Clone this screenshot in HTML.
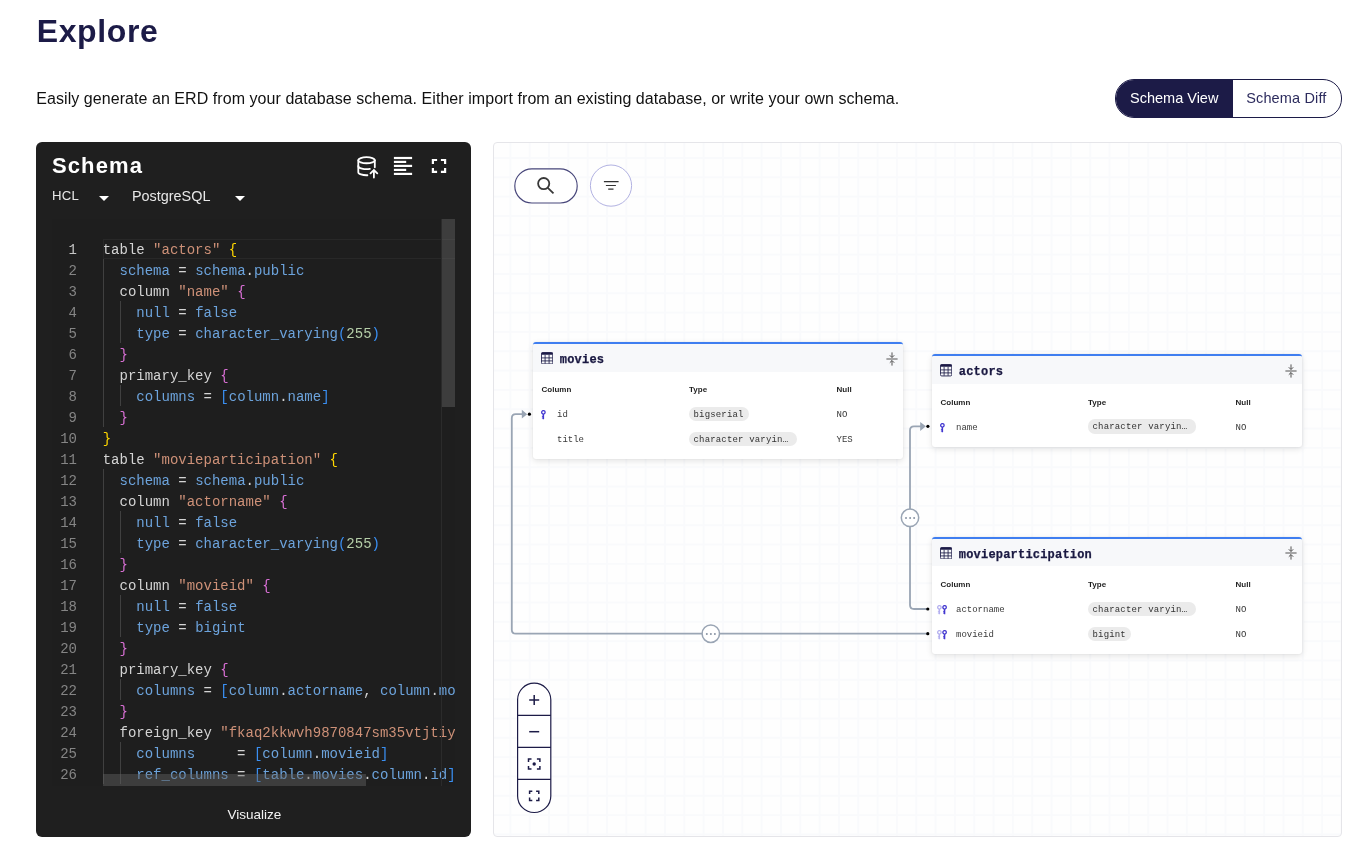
<!DOCTYPE html>
<html>
<head>
<meta charset="utf-8">
<style>
*{box-sizing:border-box;margin:0;padding:0}
html,body{width:1357px;height:855px;overflow:hidden;background:#fff;font-family:"Liberation Sans",sans-serif}
.abs{position:absolute}
#title{left:36.7px;top:10.5px;font-size:32px;font-weight:700;color:#1c1b47;line-height:40px;letter-spacing:0.62px;white-space:nowrap}
#desc{left:36.3px;top:88.8px;font-size:16px;color:#111;line-height:20px;letter-spacing:0.057px;white-space:nowrap}
#toggle{left:1115px;top:79px;width:227px;height:38.8px;border:1.3px solid #1c1b47;border-radius:19px;overflow:hidden;display:flex}
#toggle .on{width:117.2px;background:#1c1b47;color:#fff;font-size:14.5px;line-height:36.5px;padding-left:14px;white-space:nowrap}
#toggle .off{flex:1;color:#2d2c5e;font-size:14.5px;line-height:36.5px;padding-left:13px;white-space:nowrap;letter-spacing:0.15px}

/* schema panel */
#panel{left:36px;top:142px;width:435px;height:695px;background:#1f1f1f;border-radius:6px}
#ptitle{left:52px;top:152.3px;font-size:22px;font-weight:700;color:#fff;line-height:28px;letter-spacing:1.1px;white-space:nowrap}
.dd{color:#e8e8e8;font-size:14px;line-height:18px;white-space:nowrap}
.tri{width:0;height:0;border-left:5px solid transparent;border-right:5px solid transparent;border-top:5.5px solid #fff}
#editor{left:52px;top:219px;width:403px;height:567px;background:#1e1e1e;overflow:hidden}
.ln{position:absolute;left:0;margin-top:2px;width:25px;text-align:right;color:#858585;font-family:"Liberation Mono",monospace;font-size:14px;line-height:21px}
.cl{position:absolute;left:50.7px;margin-top:2px;white-space:pre;color:#d4d4d4;font-family:"Liberation Mono",monospace;font-size:14px;line-height:21px}
.g{position:absolute;width:1px;background:#404040}
.s{color:#ce9178}.k{color:#6ca3dc}.y{color:#ffd700}.p{color:#da70d6}.n{color:#b5cea8}.b{color:#3a8ff2}.w{color:#d4d4d4}
#visualize{left:227.5px;top:807px;font-size:13.5px;color:#f2f2f2;line-height:16px;white-space:nowrap}

/* canvas */
#canvas{left:493px;top:142px;width:849px;height:695px;border:1.2px solid #e5e5e9;border-radius:4px;overflow:hidden;
 background-color:#fefefe;
 background-image:linear-gradient(to right,#f9fafc 2px,transparent 2px),linear-gradient(to bottom,#f9fafc 2px,transparent 2px);
 background-size:19.34px 19.34px;background-position:15.4px 14px}

.node{position:absolute;width:370px;background:#fff;border-radius:3px;box-shadow:0 2px 6px rgba(0,0,0,0.11),0 0 2px rgba(0,0,0,0.07);border-top:2.5px solid #3f7ef0;overflow:hidden}
.nh{position:absolute;left:0;top:0;width:370px;height:27.5px;background:#f7f8fa}
.nt{position:absolute;left:26.8px;top:9px;letter-spacing:0.2px;font-family:"Liberation Mono",monospace;font-weight:700;font-size:12px;line-height:14px;color:#1a1942;-webkit-text-stroke:0.25px #1a1942;white-space:nowrap}
.ch{position:absolute;top:40.3px;font-size:8px;font-weight:700;color:#1f1f1f;line-height:12px;white-space:nowrap}
.rt{position:absolute;font-family:"Liberation Mono",monospace;font-size:9px;line-height:12px;color:#3a3a3a;white-space:nowrap}
.badge{position:absolute;height:14.4px;padding:0 5px;border-radius:7px;background:#ebebeb;font-family:"Liberation Mono",monospace;font-size:9px;letter-spacing:0.17px;line-height:16.6px;color:#333;white-space:nowrap}
</style>
</head>
<body><div id="root" style="position:absolute;left:0;top:0;width:1357px;height:855px;will-change:transform">
<div id="title" class="abs">Explore</div>
<div id="desc" class="abs">Easily generate an ERD from your database schema. Either import from an existing database, or write your own schema.</div>
<div id="toggle" class="abs"><div class="on">Schema View</div><div class="off">Schema Diff</div></div>

<div id="panel" class="abs"></div>
<div id="ptitle" class="abs">Schema</div>
<svg class="abs" style="left:352px;top:152px" width="30" height="30" viewBox="0 0 30 30" fill="none" stroke="#fff" stroke-width="1.8" stroke-linecap="round">
<ellipse cx="14.55" cy="8.2" rx="8.25" ry="3.05"/>
<path d="M6.3 8.2V20.2A8.25 3.05 0 0 0 15.4 23.25"/>
<path d="M6.3 14A8.25 3.05 0 0 0 17.9 16.9"/>
<path d="M22.8 8.2V15.3"/>
<path d="M21.9 25.6V17.9M18.5 21.4L21.9 18L25.3 21.4"/>
</svg>
<svg class="abs" style="left:390px;top:152px" width="60" height="30" viewBox="0 0 60 30" fill="#fff">
<rect x="3.9" y="4.9" width="18.2" height="2.2"/><rect x="3.9" y="8.8" width="12.3" height="2.2"/><rect x="3.9" y="12.8" width="18.2" height="2.2"/><rect x="3.9" y="16.8" width="12.3" height="2.2"/><rect x="3.9" y="20.8" width="18.2" height="2.2"/>
<path d="M41.8 12.1V6.9H47.1V9.1H44V12.1Z"/>
<path d="M56.2 12.1V6.9H50.9V9.1H54V12.1Z"/>
<path d="M41.8 15.9V21H47.1V18.8H44V15.9Z"/>
<path d="M56.2 15.9V21H50.9V18.8H54V15.9Z"/>
</svg>
<div class="abs dd" style="left:52px;top:187px;font-size:13.2px;letter-spacing:0.2px">HCL</div>
<div class="abs tri" style="left:99px;top:195.5px"></div>
<div class="abs dd" style="left:132px;top:186.7px;font-size:14.4px">PostgreSQL</div>
<div class="abs tri" style="left:235px;top:195.5px"></div>

<div id="editor" class="abs">
<div class="abs" style="left:51px;top:19.5px;width:352px;height:20px;border:1px solid #282828;border-right:none"></div>
<div class="g" style="left:51.0px;top:40px;height:168px"></div>
<div class="g" style="left:51.0px;top:250px;height:315px"></div>
<div class="g" style="left:67.8px;top:82px;height:42px"></div>
<div class="g" style="left:67.8px;top:166px;height:21px"></div>
<div class="g" style="left:67.8px;top:292px;height:42px"></div>
<div class="g" style="left:67.8px;top:376px;height:42px"></div>
<div class="g" style="left:67.8px;top:460px;height:21px"></div>
<div class="g" style="left:67.8px;top:523px;height:42px"></div>
<div class="ln" style="top:19px;color:#c6c6c6">1</div>
<div class="cl" style="top:19px">table <span class="s">"actors"</span> <span class="y">{</span></div>
<div class="ln" style="top:40px">2</div>
<div class="cl" style="top:40px">  <span class="k">schema</span> = <span class="k">schema</span>.<span class="k">public</span></div>
<div class="ln" style="top:61px">3</div>
<div class="cl" style="top:61px">  column <span class="s">"name"</span> <span class="p">{</span></div>
<div class="ln" style="top:82px">4</div>
<div class="cl" style="top:82px">    <span class="k">null</span> = <span class="k">false</span></div>
<div class="ln" style="top:103px">5</div>
<div class="cl" style="top:103px">    <span class="k">type</span> = <span class="k">character_varying</span><span class="b">(</span><span class="n">255</span><span class="b">)</span></div>
<div class="ln" style="top:124px">6</div>
<div class="cl" style="top:124px">  <span class="p">}</span></div>
<div class="ln" style="top:145px">7</div>
<div class="cl" style="top:145px">  primary_key <span class="p">{</span></div>
<div class="ln" style="top:166px">8</div>
<div class="cl" style="top:166px">    <span class="k">columns</span> = <span class="b">[</span><span class="k">column</span>.<span class="k">name</span><span class="b">]</span></div>
<div class="ln" style="top:187px">9</div>
<div class="cl" style="top:187px">  <span class="p">}</span></div>
<div class="ln" style="top:208px">10</div>
<div class="cl" style="top:208px"><span class="y">}</span></div>
<div class="ln" style="top:229px">11</div>
<div class="cl" style="top:229px">table <span class="s">"movieparticipation"</span> <span class="y">{</span></div>
<div class="ln" style="top:250px">12</div>
<div class="cl" style="top:250px">  <span class="k">schema</span> = <span class="k">schema</span>.<span class="k">public</span></div>
<div class="ln" style="top:271px">13</div>
<div class="cl" style="top:271px">  column <span class="s">"actorname"</span> <span class="p">{</span></div>
<div class="ln" style="top:292px">14</div>
<div class="cl" style="top:292px">    <span class="k">null</span> = <span class="k">false</span></div>
<div class="ln" style="top:313px">15</div>
<div class="cl" style="top:313px">    <span class="k">type</span> = <span class="k">character_varying</span><span class="b">(</span><span class="n">255</span><span class="b">)</span></div>
<div class="ln" style="top:334px">16</div>
<div class="cl" style="top:334px">  <span class="p">}</span></div>
<div class="ln" style="top:355px">17</div>
<div class="cl" style="top:355px">  column <span class="s">"movieid"</span> <span class="p">{</span></div>
<div class="ln" style="top:376px">18</div>
<div class="cl" style="top:376px">    <span class="k">null</span> = <span class="k">false</span></div>
<div class="ln" style="top:397px">19</div>
<div class="cl" style="top:397px">    <span class="k">type</span> = <span class="k">bigint</span></div>
<div class="ln" style="top:418px">20</div>
<div class="cl" style="top:418px">  <span class="p">}</span></div>
<div class="ln" style="top:439px">21</div>
<div class="cl" style="top:439px">  primary_key <span class="p">{</span></div>
<div class="ln" style="top:460px">22</div>
<div class="cl" style="top:460px">    <span class="k">columns</span> = <span class="b">[</span><span class="k">column</span>.<span class="k">actorname</span>, <span class="k">column</span>.<span class="k">movieid</span><span class="b">]</span></div>
<div class="ln" style="top:481px">23</div>
<div class="cl" style="top:481px">  <span class="p">}</span></div>
<div class="ln" style="top:502px">24</div>
<div class="cl" style="top:502px">  foreign_key <span class="s">"fkaq2kkwvh9870847sm35vtjtiy3ewwxx"</span> <span class="p">{</span></div>
<div class="ln" style="top:523px">25</div>
<div class="cl" style="top:523px">    <span class="k">columns</span>     = <span class="b">[</span><span class="k">column</span>.<span class="k">movieid</span><span class="b">]</span></div>
<div class="ln" style="top:544px">26</div>
<div class="cl" style="top:544px">    <span class="k">ref_columns</span> = <span class="b">[</span><span class="k">table</span>.<span class="k">movies</span>.<span class="k">column</span>.<span class="k">id</span><span class="b">]</span></div>
<div class="abs" style="left:389px;top:0;width:14px;height:188px;background:rgba(100,100,100,0.45)"></div>
<div class="abs" style="left:51px;top:555.2px;width:263px;height:12px;background:rgba(100,100,100,0.45)"></div>
<div class="abs" style="left:389px;top:0;width:1px;height:567px;background:#2b2b2b"></div>
</div>
<div id="visualize" class="abs">Visualize</div>

<div id="canvas" class="abs"></div>
<div class="node" style="left:533px;top:342px;height:116.8px"><div class="nh"></div><svg width="12.2" height="12.4" viewBox="0 0 12.2 12.4" style="position:absolute;left:8px;top:8.1px"><rect x="0.45" y="0.45" width="11.3" height="11.5" rx="1.3" fill="none" stroke="#1c1b47" stroke-width="0.9"/><rect x="0.45" y="0.45" width="11.3" height="2.4" rx="0.8" fill="#1c1b47"/><path d="M4.1 2.8v8.9M8.1 2.8v8.9M0.6 5.9h11M0.6 8.9h11" stroke="#1c1b47" stroke-width="0.85"/></svg><div class="nt">movies</div><svg width="12" height="14" viewBox="0 0 12 14" style="position:absolute;left:352.7px;top:7.6px"><path d="M0.4 7h11.2" stroke="#4a4a4a" stroke-width="0.95"/><path d="M6 0.4v4.9M3.8 3.3l2.2 2.2 2.2-2.2" stroke="#4a4a4a" stroke-width="0.95" fill="none"/><path d="M6 13.6V8.7M3.8 10.7l2.2-2.2 2.2 2.2" stroke="#4a4a4a" stroke-width="0.95" fill="none"/></svg><div class="ch" style="left:8.5px">Column</div><div class="ch" style="left:156px">Type</div><div class="ch" style="left:303.5px">Null</div><svg width="6" height="10" viewBox="0 0 6 10" style="position:absolute;left:7.7px;top:66.3px"><circle cx="2.4" cy="2.35" r="1.75" fill="none" stroke="#4338d0" stroke-width="1.3"/><path d="M2.4 4.1V9.3" stroke="#4338d0" stroke-width="1.4"/><path d="M0.9 6.3H2.4M0.9 8H2.4" stroke="#4338d0" stroke-width="1.0"/></svg><div class="rt" style="left:24px;top:65.2px">id</div><div class="badge" style="left:155.5px;top:63px;">bigserial</div><div class="rt" style="left:303.5px;top:65.2px">NO</div><div class="rt" style="left:24px;top:90.2px">title</div><div class="badge" style="left:155.5px;top:88px;width:108px;">character varyin…</div><div class="rt" style="left:303.5px;top:90.2px">YES</div></div>
<div class="node" style="left:932px;top:354.4px;height:92.3px"><div class="nh"></div><svg width="12.2" height="12.4" viewBox="0 0 12.2 12.4" style="position:absolute;left:8px;top:8.1px"><rect x="0.45" y="0.45" width="11.3" height="11.5" rx="1.3" fill="none" stroke="#1c1b47" stroke-width="0.9"/><rect x="0.45" y="0.45" width="11.3" height="2.4" rx="0.8" fill="#1c1b47"/><path d="M4.1 2.8v8.9M8.1 2.8v8.9M0.6 5.9h11M0.6 8.9h11" stroke="#1c1b47" stroke-width="0.85"/></svg><div class="nt">actors</div><svg width="12" height="14" viewBox="0 0 12 14" style="position:absolute;left:352.7px;top:7.6px"><path d="M0.4 7h11.2" stroke="#4a4a4a" stroke-width="0.95"/><path d="M6 0.4v4.9M3.8 3.3l2.2 2.2 2.2-2.2" stroke="#4a4a4a" stroke-width="0.95" fill="none"/><path d="M6 13.6V8.7M3.8 10.7l2.2-2.2 2.2 2.2" stroke="#4a4a4a" stroke-width="0.95" fill="none"/></svg><div class="ch" style="left:8.5px">Column</div><div class="ch" style="left:156px">Type</div><div class="ch" style="left:303.5px">Null</div><svg width="6" height="10" viewBox="0 0 6 10" style="position:absolute;left:7.7px;top:66.3px"><circle cx="2.4" cy="2.35" r="1.75" fill="none" stroke="#4338d0" stroke-width="1.3"/><path d="M2.4 4.1V9.3" stroke="#4338d0" stroke-width="1.4"/><path d="M0.9 6.3H2.4M0.9 8H2.4" stroke="#4338d0" stroke-width="1.0"/></svg><div class="rt" style="left:24px;top:65.2px">name</div><div class="badge" style="left:155.5px;top:63px;width:108px;">character varyin…</div><div class="rt" style="left:303.5px;top:65.2px">NO</div></div>
<div class="node" style="left:932px;top:536.6px;height:117.7px"><div class="nh"></div><svg width="12.2" height="12.4" viewBox="0 0 12.2 12.4" style="position:absolute;left:8px;top:8.1px"><rect x="0.45" y="0.45" width="11.3" height="11.5" rx="1.3" fill="none" stroke="#1c1b47" stroke-width="0.9"/><rect x="0.45" y="0.45" width="11.3" height="2.4" rx="0.8" fill="#1c1b47"/><path d="M4.1 2.8v8.9M8.1 2.8v8.9M0.6 5.9h11M0.6 8.9h11" stroke="#1c1b47" stroke-width="0.85"/></svg><div class="nt">movieparticipation</div><svg width="12" height="14" viewBox="0 0 12 14" style="position:absolute;left:352.7px;top:7.6px"><path d="M0.4 7h11.2" stroke="#4a4a4a" stroke-width="0.95"/><path d="M6 0.4v4.9M3.8 3.3l2.2 2.2 2.2-2.2" stroke="#4a4a4a" stroke-width="0.95" fill="none"/><path d="M6 13.6V8.7M3.8 10.7l2.2-2.2 2.2 2.2" stroke="#4a4a4a" stroke-width="0.95" fill="none"/></svg><div class="ch" style="left:8.5px">Column</div><div class="ch" style="left:156px">Type</div><div class="ch" style="left:303.5px">Null</div><svg width="11" height="10" viewBox="0 0 11 10" style="position:absolute;left:5px;top:66.3px"><g><circle cx="2.4" cy="2.35" r="1.75" fill="none" stroke="#b4b0f0" stroke-width="1.3"/><path d="M2.4 4.1V9.3" stroke="#b4b0f0" stroke-width="1.4"/><path d="M0.9 6.3H2.4M0.9 8H2.4" stroke="#b4b0f0" stroke-width="1.0"/></g><g transform="translate(5.2,0)"><circle cx="2.4" cy="2.35" r="1.75" fill="none" stroke="#4338d0" stroke-width="1.3"/><path d="M2.4 4.1V9.3" stroke="#4338d0" stroke-width="1.4"/><path d="M0.9 6.3H2.4M0.9 8H2.4" stroke="#4338d0" stroke-width="1.0"/></g></svg><div class="rt" style="left:24px;top:65.2px">actorname</div><div class="badge" style="left:155.5px;top:63px;width:108px;">character varyin…</div><div class="rt" style="left:303.5px;top:65.2px">NO</div><svg width="11" height="10" viewBox="0 0 11 10" style="position:absolute;left:5px;top:91.3px"><g><circle cx="2.4" cy="2.35" r="1.75" fill="none" stroke="#b4b0f0" stroke-width="1.3"/><path d="M2.4 4.1V9.3" stroke="#b4b0f0" stroke-width="1.4"/><path d="M0.9 6.3H2.4M0.9 8H2.4" stroke="#b4b0f0" stroke-width="1.0"/></g><g transform="translate(5.2,0)"><circle cx="2.4" cy="2.35" r="1.75" fill="none" stroke="#4338d0" stroke-width="1.3"/><path d="M2.4 4.1V9.3" stroke="#4338d0" stroke-width="1.4"/><path d="M0.9 6.3H2.4M0.9 8H2.4" stroke="#4338d0" stroke-width="1.0"/></g></svg><div class="rt" style="left:24px;top:90.2px">movieid</div><div class="badge" style="left:155.5px;top:88px;">bigint</div><div class="rt" style="left:303.5px;top:90.2px">NO</div></div>
<svg class="abs" style="left:0;top:0" width="1357" height="855" viewBox="0 0 1357 855">
 <g fill="none" stroke="#9aa5b4" stroke-width="1.8">
  <path d="M927 609H914Q910 609 910 605V430.3Q910 426.3 914 426.3H921.5"/>
  <path d="M927 633.7H515.9Q511.8 633.7 511.8 629.7V418.2Q511.8 414.2 515.8 414.2H522.5"/>
 </g>
 <g fill="#9aa5b4">
  <path d="M920.2 422.1L925.9 426.3L920.2 430.9Z"/>
  <path d="M521.8 409.8L527.2 414.2L521.8 418.6Z"/>
 </g>
 <g fill="#fff" stroke="#9aa5b4" stroke-width="1.5">
  <circle cx="910" cy="517.8" r="8.7"/>
  <circle cx="710.8" cy="633.7" r="8.7"/>
 </g>
 <g fill="#8893a3">
  <circle cx="906" cy="518" r="1"/><circle cx="910.1" cy="518" r="1"/><circle cx="914.1" cy="518" r="1"/>
  <circle cx="706.8" cy="633.9" r="1"/><circle cx="710.9" cy="633.9" r="1"/><circle cx="714.9" cy="633.9" r="1"/>
 </g>
 <g fill="#000">
  <circle cx="529.4" cy="414.2" r="1.6"/>
  <circle cx="927.9" cy="426.3" r="1.6"/>
  <circle cx="927.8" cy="609" r="1.6"/>
  <circle cx="927.8" cy="633.7" r="1.6"/>
 </g>
 <!-- search pill -->
 <rect x="514.8" y="168.8" width="62.4" height="34.2" rx="17.1" fill="#fff" stroke="#47467a" stroke-width="1.15"/>
 <circle cx="543.7" cy="183.6" r="5.6" fill="none" stroke="#383838" stroke-width="1.8"/>
 <path d="M547.8 187.8L553.5 193.4" stroke="#383838" stroke-width="1.8" stroke-linecap="butt"/>
 <!-- filter -->
 <circle cx="611" cy="185.6" r="20.6" fill="#fff" stroke="#b2b2e2" stroke-width="1"/>
 <path d="M603.9 181.6H618.6M605.9 185.5H615.9M608.2 189.2H613.5" stroke="#333" stroke-width="1.2"/>
 <!-- zoom controls -->
 <rect x="517.6" y="683.2" width="33.2" height="129.3" rx="16.6" fill="#fff" stroke="#1c1b47" stroke-width="1.2"/>
 <path d="M517.6 715.4H550.8M517.6 747.3H550.8M517.6 779.4H550.8" stroke="#1c1b47" stroke-width="1.2"/>
 <path d="M534.2 694.9V704.9M529.2 699.9H539.2" stroke="#1c1b47" stroke-width="1.5"/>
 <path d="M529.2 731.7H539.2" stroke="#1c1b47" stroke-width="1.5"/>
 <g fill="none" stroke="#1c1b47" stroke-width="1.5">
  <path d="M528.5 761.9V758.9H531.5M536.9 758.9H539.9V761.9M539.9 766.1V769.1H536.9M531.5 769.1H528.5V766.1"/>
  <path d="M529.6 794V791.2H532.3M536.1 791.2H538.8V794M538.8 797.6V800.4H536.1M532.3 800.4H529.6V797.6"/>
 </g>
 <circle cx="534.2" cy="764" r="1.7" fill="#1c1b47"/>
</svg>

</div></body>
</html>
